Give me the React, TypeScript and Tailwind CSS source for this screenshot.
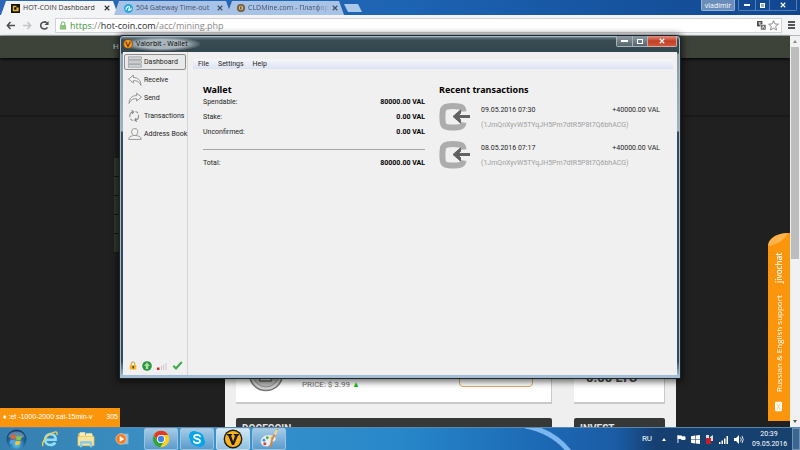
import React from "react";

const CHROME_FONT = "font-['Open_Sans','Noto_Sans',sans-serif]";
const WALLET_FONT = "font-['Roboto','Noto_Sans',sans-serif]";

type Glyph = { className?: string };

function CoinV({ className }: Glyph) {
  return (
    <svg viewBox="0 0 20 20" className={className} aria-hidden="true">
      <circle cx="10" cy="10" r="9.4" fill="#1d1a12" />
      <circle cx="10" cy="10" r="8" fill="#fbb21c" />
      <path d="M4 5h5v1.200l-1 .2 2.200 6.200 1.900-6-1.400-.4V5H16v1.200l-1 .3L11 16H9L5.200 6.500l-1.200-.3z" fill="#1d1a12" />
    </svg>
  );
}

function TitleCoin({ className }: Glyph) {
  return (
    <svg viewBox="0 0 20 20" className={className} aria-hidden="true">
      <circle cx="10" cy="10" r="9.5" fill="#8a4a08" />
      <circle cx="10" cy="10" r="8" fill="#f29a1c" />
      <path d="M5.500 5.500 10 15l4.500-9.500" fill="none" stroke="#6b3a08" strokeWidth="2.400" />
    </svg>
  );
}

function ChromeIcon({ className }: Glyph) {
  return (
    <svg viewBox="0 0 24 24" className={className} aria-hidden="true">
      <circle cx="12" cy="12" r="11" fill="#fbcf1c" />
      <path d="M2.500 6.500A11 11 0 0 1 21.600 6.700H12a5.300 5.300 0 0 0-5 7.200z" fill="#e0392b" />
      <path d="M2.500 6.500A11 11 0 0 0 11 23l4.700-7.300A5.300 5.300 0 0 1 7 14.200z" fill="#2fa34c" />
      <circle cx="12" cy="12" r="5.300" fill="#fff" />
      <circle cx="12" cy="12" r="4.200" fill="#3f82ea" />
    </svg>
  );
}

function SkypeIcon({ className }: Glyph) {
  return (
    <svg viewBox="0 0 24 24" className={className} aria-hidden="true">
      <circle cx="8" cy="8" r="6.800" fill="#0aa5e6" />
      <circle cx="16" cy="16" r="6.800" fill="#0aa5e6" />
      <circle cx="12" cy="12" r="9.500" fill="#0aa5e6" />
      <path d="M16 8.600c-.8-1.600-2.200-2.200-4-2.200-2.200 0-3.800 1-3.800 2.700 0 3.800 7.800 1.900 7.800 5.600 0 1.900-1.700 2.900-4 2.900-2 0-3.600-.8-4.300-2.500" fill="none" stroke="#fff" strokeWidth="2.300" strokeLinecap="round" />
    </svg>
  );
}

function PaintIcon({ className }: Glyph) {
  return (
    <svg viewBox="0 0 24 24" className={className} aria-hidden="true">
      <path d="M2 15c0-5 5-8.500 11-8 5 .4 8 3 7 6s-4 1.500-5.500 3.500S13 21 8.500 21C4.500 21 2 18.500 2 15z" fill="#e8eef2" stroke="#9fb4c2" strokeWidth=".7" />
      <circle cx="6" cy="13.500" r="1.700" fill="#3b91d8" />
      <circle cx="10" cy="10.500" r="1.700" fill="#4fb04a" />
      <circle cx="15" cy="10.500" r="1.500" fill="#f0c32b" />
      <circle cx="7" cy="17.700" r="1.800" fill="#d84634" />
      <path d="m21.500 1-6 12-1.500 8" fill="none" stroke="#c98a42" strokeWidth="2.200" strokeLinecap="round" />
      <path d="m19 7 2.500-6" stroke="#ecd3a4" strokeWidth="3" />
    </svg>
  );
}

function StartOrb({ className }: Glyph) {
  return (
    <svg viewBox="0 0 24 24" className={className} aria-hidden="true">
      <defs>
        <radialGradient id="orb" cx=".5" cy=".75" r=".7">
          <stop offset="0" stopColor="#5ec8ef" />
          <stop offset=".6" stopColor="#20639b" />
          <stop offset="1" stopColor="#164068" />
        </radialGradient>
      </defs>
      <circle cx="12" cy="12" r="11.500" fill="url(#orb)" />
      <path d="M2.500 9a10 9 0 0 1 19 0c-6 2-13 2-19 0z" fill="#fff" opacity=".3" />
      <path d="M6 7.500c2-1.200 4-1 5.500 0l-1 4.200c-1.800-.9-3.500-.9-5.500.2z" fill="#e8602c" />
      <path d="M12.500 8c1.800.9 3.700.8 5.700-.2l-1.100 4.300c-1.900 1-3.700 1-5.600 0z" fill="#8cc63e" />
      <path d="M4.800 13c2-1 3.700-1 5.400 0l-1 4.200c-1.700-1-3.500-1-5.400 0z" fill="#4aa6e6" />
      <path d="M11.200 13.300c1.900 1 3.700 1 5.600 0l-1 4.200c-2 1-3.800 1-5.600 0z" fill="#fbc62d" />
    </svg>
  );
}

function ExplorerE({ className }: Glyph) {
  return (
    <svg viewBox="0 0 24 24" className={className} aria-hidden="true">
      <path d="M6 13h13.500C20 8.500 17 5.500 12.800 5.500S5.500 8.800 5.500 13s3 7 7.200 7c3 0 5-1.200 6.200-3.300" fill="none" stroke="#8fdcfb" strokeWidth="3.600" />
      <path d="M3 21.500C-.5 18 8 5 18 2.800c3.500-.8 4.200 1.200 3 4" fill="none" stroke="#f7cf4c" strokeWidth="1.700" />
    </svg>
  );
}

function FolderIcon({ className }: Glyph) {
  return (
    <svg viewBox="0 0 24 22" className={className} aria-hidden="true">
      <path d="M2 3h7l2 2h10v14H2z" fill="#e9c964" />
      <path d="M4 1.500h7v6H4zM12 3h8v5h-8z" fill="#f7eeb4" />
      <path d="M1.500 7h21v12h-21z" fill="#f8e59b" stroke="#d8b655" strokeWidth=".7" />
      <path d="M4 21v-5.500c0-1.500 1-2.500 2.500-2.500h11c1.500 0 2.500 1 2.500 2.500V21h-3v-4.500H7V21z" fill="#8dcbe9" />
    </svg>
  );
}

function MediaIcon({ className }: Glyph) {
  return (
    <svg viewBox="0 0 24 24" className={className} aria-hidden="true">
      <path d="M9 3h14v18H9z" fill="#9fc9e6" opacity=".8" />
      <circle cx="10.500" cy="12" r="9" fill="#f37b22" stroke="#fbd0a5" strokeWidth="1.200" />
      <path d="m8 7 8 5-8 5z" fill="#fff" />
    </svg>
  );
}

function IncomingIcon({ className }: Glyph) {
  return (
    <svg viewBox="0 0 31 28" className={className} aria-hidden="true">
      <path d="M24.500 8.500C24.300 4.800 23 3.800 20 3.500c-4-.5-8.500-.5-11.500 0-3 .4-4.300 1.700-4.700 4.300-.5 4-.5 8.300 0 12 .4 2.600 1.800 3.900 4.500 4.300 3.700.6 8 .6 11.700 0 2.800-.4 4-1.300 4.500-4.600" fill="none" stroke="#adadad" strokeWidth="6" />
      <path d="M31 13.500H17" fill="none" stroke="#616161" strokeWidth="3" />
      <path d="M21.500 7v3.500l-3.500 3 3.500 3V20L14 13.500z" fill="#616161" stroke="#616161" />
    </svg>
  );
}

const navItems = [
  {
    label: "Dashboard",
    art: (
      <g fill="#d2d4d8" stroke="#84878c" strokeWidth="1">
        <rect x="1" y="1.500" width="24" height="4" />
        <rect x="1" y="8" width="24" height="4" />
        <rect x="1" y="14.500" width="24" height="4" />
      </g>
    ),
  },
  {
    label: "Receive",
    art: <path d="M10 2 1 8.500 10 15v-4c7 0 11 2 14 8 0-8-5-13-14-13z" fill="#f4f4f4" stroke="#7d8084" strokeWidth="1.400" />,
  },
  {
    label: "Send",
    art: <path d="m16 2 9 6.500-9 6.500v-4C9 11 5 13 2 19 2 11 7 6 16 6z" fill="#f4f4f4" stroke="#7d8084" strokeWidth="1.400" />,
  },
  {
    label: "Transactions",
    art: (
      <g fill="none" stroke="#85888c" strokeWidth="1.800">
        <path d="M3.500 12C2.500 7 5 4 10 3M6.500.5 10.500 3 8 6.500" />
        <path d="M19.500 8c1 5-1.500 8-6.500 9m3.500 2.500L12.500 17l2.500-3.500" />
        <path d="M14 2.500q3 .5 4.500 3M9 17.500q-3-.5-4.500-3" />
      </g>
    ),
  },
  {
    label: "Address Book",
    art: (
      <g fill="#f4f4f4" stroke="#7d8084" strokeWidth="1.400">
        <path d="M1.500 19c0-4 3-5.500 7-6l1.500-1h5l1.500 1c4.500.5 8 2 8 6z" />
        <path d="M12.500 1c4.500 0 6 2.500 5.500 6-.4 3-2.500 5.500-5.500 5.500S7.400 10 7 7c-.5-3.500 1-6 5.500-6z" />
      </g>
    ),
  },
];

const balances = [
  { label: "Spendable:", value: "80000.00 VAL" },
  { label: "Stake:", value: "0.00 VAL" },
  { label: "Unconfirmed:", value: "0.00 VAL" },
];

const transactions = [
  { date: "09.05.2016 07:30", amount: "+40000.00 VAL" },
  { date: "08.05.2016 07:17", amount: "+40000.00 VAL" },
];

function TabShape({ active, children }: { active?: boolean; children: React.ReactNode }) {
  return (
    <button
      type="button"
      className={
        "-mr-1 flex h-[14px] w-[117px] items-center gap-[3px] pr-2 pl-[10px] text-left text-[7px] [clip-path:polygon(5px_0,112px_0,117px_100%,0_100%)] " +
        (active ? "bg-[#f3f4f6] text-[#333]" : "bg-[#a9c3e6] text-[#3d4f6b]")
      }
    >
      {children}
    </button>
  );
}

function Cross({ className }: Glyph) {
  return (
    <svg viewBox="0 0 8 8" className={className} aria-hidden="true">
      <path d="m1 1 6 6m0-6-6 6" stroke="currentColor" strokeWidth="1.500" />
    </svg>
  );
}

function BrowserTop() {
  return (
    <header className={"shrink-0 " + CHROME_FONT}>
      <div className="flex h-[15px] items-start justify-between bg-gradient-to-r from-[#2c68b5] via-[#1d64b3] to-[#11468f]">
        <div className="flex items-end pt-px pl-px">
          <TabShape active>
            <svg viewBox="0 0 10 10" className="size-[9px] shrink-0" aria-hidden="true">
              <path d="M0 0h10v10H0z" fill="#151515" />
              <path d="M2 2h4v1.500H3.500v3H6V8H2zM6 4h2.500v4H6z" fill="#e5b52d" />
            </svg>
            <span className="flex-1 whitespace-nowrap">HOT-COIN Dashboard</span>
            <Cross className="size-[6px] shrink-0" />
          </TabShape>
          <TabShape>
            <svg viewBox="0 0 10 10" className="size-[9px] shrink-0" aria-hidden="true">
              <circle cx="5" cy="5" r="5" fill="#26a9df" />
              <path d="M2 6.500C3 3 5 2 6 3.500S4 7 5.500 7 7.500 5.500 8.500 5" fill="none" stroke="#fff" strokeWidth="1.200" />
            </svg>
            <span className="flex-1 whitespace-nowrap">504 Gateway Time-out</span>
            <Cross className="size-[6px] shrink-0" />
          </TabShape>
          <TabShape>
            <svg viewBox="0 0 10 10" className="size-[8px] shrink-0" aria-hidden="true">
              <circle cx="5" cy="5" r="5" fill="#6b5a3a" />
              <circle cx="5" cy="5" r="3" fill="#cdb684" />
              <path d="M4 3h1.500v4H4z" fill="#5a4a2c" />
            </svg>
            <span className="flex-1 whitespace-nowrap [mask-image:linear-gradient(90deg,#000_85%,transparent)]">CLDMine.com - Платфор</span>
            <Cross className="size-[6px] shrink-0" />
          </TabShape>
          <button type="button" aria-label="New tab" className="mb-[3px] ml-1 h-[8px] w-[18px] bg-[#a9c8ea] [clip-path:polygon(0_0,14px_0,18px_100%,4px_100%)]" />
        </div>
        <div className="flex text-white">
          <button type="button" className="mr-[3px] h-[11px] w-[34px] rounded-b-xs border border-t-0 border-[#93b4d8] bg-[#6b8db9] text-center text-[7px] leading-[9px]">
            vladimir
          </button>
          <button type="button" aria-label="Minimize" className="flex h-[11px] w-[17px] items-center justify-center rounded-bl-xs border-b border-l border-[#4f80b8]">
            <span className="h-[2px] w-[6px] bg-white" />
          </button>
          <button type="button" aria-label="Restore" className="flex h-[11px] w-[14px] items-center justify-center border-b border-l border-[#4f80b8]">
            <span className="size-[5px] border border-white bg-[#8fb1dc]" />
          </button>
          <button type="button" aria-label="Close" className="mr-[3px] flex h-[11px] w-[28px] items-center justify-center rounded-br-xs border-x border-b border-[#4f80b8]">
            <Cross className="size-[6px]" />
          </button>
        </div>
      </div>
      <div className="flex h-[21px] items-center border-b border-[#b5b7ba] bg-[#f3f4f6] pr-[5px] pl-[6px]">
        <button type="button" aria-label="Back">
          <svg viewBox="0 0 10 10" className="size-[9px]"><path d="M10 5H1.500M5 1 1.500 5 5 9" fill="none" stroke="#4e4e4e" strokeWidth="1.700" /></svg>
        </button>
        <button type="button" aria-label="Forward" className="ml-[8px]">
          <svg viewBox="0 0 10 10" className="size-[9px]"><path d="M0 5h8.500M5 1l3.500 4L5 9" fill="none" stroke="#c4c4c4" strokeWidth="1.700" /></svg>
        </button>
        <button type="button" aria-label="Reload" className="ml-[8px]">
          <svg viewBox="0 0 10 10" className="size-[9px]"><path d="M8.300 7A4 4 0 1 1 7.500 2" fill="none" stroke="#4e4e4e" strokeWidth="1.700" /><path d="M9.500 0v4.500H5z" fill="#4e4e4e" /></svg>
        </button>
        <div className="ml-[6px] flex h-[15px] flex-1 items-center border border-[#d2d3d6] bg-white pr-[2px] pl-[3px]">
          <svg viewBox="0 0 8 10" className="h-[9px] w-[8px]" aria-hidden="true">
            <path d="M2 5V3.200C2 .3 6 .3 6 3.200V5" fill="none" stroke="#8ac17c" strokeWidth="1.300" />
            <path d="M.5 4.500h7v5h-7z" fill="#8ac17c" />
          </svg>
          <div role="textbox" aria-label="Address" tabIndex={0} className="ml-[3px] flex-1 text-[9px] leading-[13px] text-[#8a8a8a]">
            <span className="text-[#3c9440]">https</span>://<span className="text-[#2b2b2b]">hot-coin.com</span>/acc/mining.php
          </div>
          <button type="button" aria-label="Translate" className="mr-[2px]">
            <svg viewBox="0 0 10 10" className="size-[9px]"><path d="M0 0h6v6H0z" fill="#4e4e4e" /><path d="M4 4h6v6H4z" fill="#666" stroke="#fff" strokeWidth=".6" /><path d="M1.500 2h3M3 2v2.500M5.700 8.500 7 5.500l1.300 3" fill="none" stroke="#fff" strokeWidth=".8" /></svg>
          </button>
          <button type="button" aria-label="Bookmark">
            <svg viewBox="0 0 12 12" className="size-[11px]"><path d="m6 .8 1.500 3.500 3.800.3-2.900 2.500.9 3.800L6 8.900l-3.300 2 .9-3.800L.7 4.600l3.800-.3z" fill="#fff" stroke="#666" strokeWidth=".8" /></svg>
          </button>
        </div>
        <button type="button" aria-label="Menu" className="ml-[6px] flex w-[7px] flex-col gap-px">
          <span className="h-[2px] bg-[#555]" />
          <span className="h-[2px] bg-[#555]" />
          <span className="h-[2px] bg-[#555]" />
        </button>
      </div>
    </header>
  );
}

function SiteContent() {
  return (
    <div className="flex min-h-0 flex-1">
      <div className="flex min-w-0 flex-1 flex-col bg-[#202020]">
        <div className="h-[22px] shrink-0 bg-[#3d4338] pl-[113px] font-['Roboto',sans-serif] text-[8px] leading-[22px] text-[#c9ccc4] shadow-[0_1px_3px_#000]">H</div>
        <div className="h-[59px] shrink-0 border-b-2 border-[#191919]" />
        <div className="flex min-h-0 flex-1">
          <div className="w-[225px] pt-[41px] pl-[114px]">
            {[0, 1, 2, 3, 4].map((i) => (
              <div key={i} className="h-[19px] border-b border-[#161a14] bg-[#303b2a]" />
            ))}
          </div>
          <div className="flex w-[451px] flex-col overflow-hidden bg-[#efefef] px-[11px] font-['Roboto',sans-serif]">
            <div className="grid shrink-0 grid-cols-[316px_91px] gap-[22px]">
              <div className="flex h-[287px] items-end border-r border-b-2 border-[#c9c9c9] bg-white pb-[10px] pl-[12px]">
                <svg viewBox="0 0 36 36" className="size-[36px]" aria-hidden="true">
                  <circle cx="18" cy="18" r="16.500" fill="#cfcfcf" stroke="#777" strokeWidth="1.500" />
                  <circle cx="18" cy="18" r="13" fill="#b9b9b9" stroke="#8c8c8c" />
                  <path d="M10 15h16l-3 10H12zM12 20h12" fill="#dedede" stroke="#666" strokeWidth="1.500" />
                </svg>
                <p className="mb-px ml-[18px] text-[8px] leading-[12px] whitespace-nowrap text-[#6f6f6f]">
                  PRICE: $ 3.99 <span className="text-[#19c423]">▲</span>
                </p>
                <button type="button" className="mb-[5px] ml-auto h-[20px] w-[74px] rounded-sm border border-[#e2ab62] text-[7px] text-[#777]">SELECT</button>
                <div className="w-[18px]" />
              </div>
              <div className="flex h-[287px] items-end border-r border-b-2 border-[#c9c9c9] bg-white pb-[17px] pl-[12px] text-[13px] leading-[14px] font-bold whitespace-nowrap text-[#4a4a4a]">0.00 LTC</div>
            </div>
            <div className="mt-[14px] grid shrink-0 grid-cols-[316px_91px] gap-[22px] text-[10px] leading-[12px] font-bold text-[#e2e2e2]">
              <h2 className="h-[24px] rounded-t-xs bg-[#363837] pt-[5px] pl-[6px]">DOGECOIN</h2>
              <h2 className="h-[24px] rounded-t-xs bg-[#363837] pt-[5px] pl-[6px]">INVEST</h2>
            </div>
          </div>
        </div>
      </div>
      <div className="flex w-[10px] flex-col items-center bg-[#f1f1f1]">
        <span className="mt-[4px] size-0 border-x-2 border-b-3 border-x-transparent border-b-[#8b8b8b]" />
        <span className="mt-[4px] h-[212px] w-[8px] bg-[#bdbdbd]" />
        <span className="mt-auto mb-[4px] size-0 border-x-2 border-t-3 border-x-transparent border-t-[#555]" />
      </div>
    </div>
  );
}

function WalletWindow() {
  return (
    <section
      aria-label="Valorbit - Wallet"
      className={"absolute top-[35px] left-[119px] flex h-[344px] w-[562px] flex-col rounded-t-sm border border-[#1c252b] bg-[#33454e] px-[3px] pb-[3px] text-[7px] text-[#1e1e1e] shadow-[0_1px_6px_2px_rgba(0,0,0,0.55),inset_0_0_0_1px_#a6bccb] bg-[linear-gradient(180deg,#8698a0_0,#3a4c54_4px,#33454d_17px,#8b9aa2_18px,#a2b1ba_95px,#36495a_96px,#33485a_325px,#a2bfdb_340px)] " + WALLET_FONT}
    >
      <div className="flex h-[16px] shrink-0 items-center justify-between">
        <div className="flex items-center gap-[3px] rounded-full bg-[radial-gradient(ellipse,#a9b5bb_45%,transparent_75%)] pr-[12px]">
          <TitleCoin className="size-[10px]" />
          <h1 className="font-['Open_Sans',sans-serif] text-[7px] leading-[14px] whitespace-nowrap text-black">Valorbit - Wallet</h1>
        </div>
        <div className="flex self-start">
          <button type="button" aria-label="Minimize" className="flex h-[11px] w-[17px] items-center justify-center rounded-bl-xs border border-t-0 border-[#a8b2b8] bg-gradient-to-b from-[#8f9ba2] to-[#56656e]">
            <span className="h-[2px] w-[7px] bg-white" />
          </button>
          <button type="button" aria-label="Maximize" className="flex h-[11px] w-[15px] items-center justify-center border-r border-b border-[#a8b2b8] bg-gradient-to-b from-[#8f9ba2] to-[#56656e]">
            <span className="h-[5px] w-[6px] border border-white" />
          </button>
          <button type="button" aria-label="Close" className="flex h-[11px] w-[29px] items-center justify-center rounded-br-xs border-r border-b border-[#d8aaa0] bg-gradient-to-b from-[#dc9080] via-[#c53e25] to-[#d0563c] text-white">
            <Cross className="size-[6px]" />
          </button>
        </div>
      </div>
      <div className="flex min-h-0 flex-1 bg-[#f0f0f0]">
        <nav className="flex w-[65px] shrink-0 flex-col justify-between border-r border-[#d6d6d6] px-px pt-[2px] pb-[2px]">
          <div className="flex h-[88px] flex-col justify-between">
            {navItems.map((item, i) => (
              <button
                type="button"
                key={item.label}
                className={
                  "flex h-[16px] items-center gap-[2px] border pl-[3px] text-[7px] whitespace-nowrap " +
                  (i === 0 ? "rounded-xs border-[#8d8d8d] bg-[#e9e9e9]" : "border-transparent")
                }
              >
                <svg viewBox="0 0 26 20" className="h-[12px] w-[14px] shrink-0" preserveAspectRatio="none" aria-hidden="true">
                  {item.art}
                </svg>
                {item.label}
              </button>
            ))}
          </div>
          <div className="flex h-[15px] items-center gap-[5px] pl-[5px]">
            <svg viewBox="0 0 9 10" className="h-[9px] w-[8px]" aria-label="Locked">
              <path d="M2.500 5V3c0-2.500 4-2.500 4 0v2" fill="none" stroke="#c6a154" strokeWidth="1.200" />
              <path d="M.8 4.500h7.400v5H.8z" fill="#f9b71d" />
              <path d="M4 5.500h1.500v3H4z" fill="#333" />
            </svg>
            <svg viewBox="0 0 10 10" className="size-[10px]" aria-label="Staking">
              <circle cx="5" cy="5" r="4.800" fill="#2d9541" />
              <path d="M5 1.500 8 5H6.200v3H3.800V5H2z" fill="#a6e5a3" />
            </svg>
            <svg viewBox="0 0 10 9" className="h-[9px] w-[10px]" aria-label="Signal">
              <path d="M0 6.500h2.500V9H0z" fill="#d22" />
              <path d="M4 5h1v4H4zM6 3.500h1V9H6zM8.500 2h1v7h-1z" fill="#c9c9c9" />
            </svg>
            <svg viewBox="0 0 10 9" className="h-[9px] w-[11px]" aria-label="Synchronized">
              <path d="M.8 4.800 3.500 7.500 9.300 1" fill="none" stroke="#43a84a" strokeWidth="2" />
            </svg>
          </div>
        </nav>
        <div className="flex min-w-0 flex-1 flex-col pr-[4px] pl-[5px]">
          <div role="menubar" className="mt-[7px] flex h-[10px] items-center gap-[9px] bg-gradient-to-b from-[#f6f7fb] to-[#dde2f2] pl-[5px]">
            {["File", "Settings", "Help"].map((m) => (
              <button type="button" role="menuitem" key={m} className="leading-[10px]">
                {m}
              </button>
            ))}
          </div>
          <div className="flex justify-between pt-[15px] pr-[13px] pl-[10px]">
            <section className="w-[222px]">
              <h2 className="font-['Noto_Sans',sans-serif] text-[9px] leading-[12px] font-bold text-black">Wallet</h2>
              <dl className="flex flex-col gap-[5px] pt-px">
                {balances.map((b) => (
                  <div key={b.label} className="flex justify-between leading-[10px]">
                    <dt>{b.label}</dt>
                    <dd className="font-bold text-black">{b.value}</dd>
                  </div>
                ))}
                <div className="mt-[7px] flex justify-between border-t border-[#a5a5a5] pt-[8px] leading-[10px]">
                  <dt>Total:</dt>
                  <dd className="font-bold text-black">80000.00 VAL</dd>
                </div>
              </dl>
            </section>
            <section className="w-[221px]">
              <h2 className="font-['Noto_Sans',sans-serif] text-[9px] leading-[12px] font-bold text-black">Recent transactions</h2>
              <ul className="flex flex-col gap-[10px] pt-[7px]">
                {transactions.map((t) => (
                  <li key={t.date} className="flex h-[28px] gap-[11px]">
                    <IncomingIcon className="h-[28px] w-[31px] shrink-0" />
                    <div className="flex-1 leading-[10px]">
                      <div className="flex justify-between pt-[2px]">
                        <span>{t.date}</span>
                        <span>{t.amount}</span>
                      </div>
                      <p className="pt-[5px] text-[#a0a0a0]">(1JmQnXyvW5TYqJH5Pm7dtR5P8t7Q6bhACG)</p>
                    </div>
                  </li>
                ))}
              </ul>
            </section>
          </div>
        </div>
      </div>
    </section>
  );
}

function Taskbar() {
  const pinned = "flex h-full w-[36px] items-center justify-center";
  const running = "flex h-full w-[34px] items-center justify-center rounded-xs border border-[#9cc4df] bg-gradient-to-b from-[#a4cbe6] to-[#5a9bcd]";
  const focused = "flex h-full w-[34px] items-center justify-center rounded-xs border border-[#c3dcec] bg-gradient-to-b from-[#d3e7f3] to-[#8fc0e2]";
  return (
    <footer className="relative flex h-[23px] shrink-0 items-center overflow-hidden border-t border-[#5a87ae] bg-[linear-gradient(90deg,#357fae_0,#3c94cb_25%,#2787c9_50%,#1c68b4_68%,#1b5ca5_77%,#153f70_82%,#17426f_100%)] font-['Open_Sans',sans-serif]">
      <svg viewBox="0 0 60 23" className="absolute top-0 left-[525px] h-[23px] w-[60px]" aria-hidden="true">
        <path d="M0-2C22 2 36 12 46 26" fill="none" stroke="#8cc4fa" strokeWidth="5" opacity=".85" />
      </svg>
      <button type="button" aria-label="Start" className="flex w-[32px] justify-center"><StartOrb className="size-[21px]" /></button>
      <button type="button" aria-label="Internet Explorer" className={pinned}><ExplorerE className="size-[18px]" /></button>
      <button type="button" aria-label="Explorer" className={pinned}><FolderIcon className="h-[17px] w-[20px]" /></button>
      <button type="button" aria-label="Media Player" className={pinned}><MediaIcon className="size-[14px]" /></button>
      <div className="ml-[4px] flex h-full gap-[2px]">
        <button type="button" aria-label="Chrome" className={running}><ChromeIcon className="size-[18px]" /></button>
        <button type="button" aria-label="Skype" className={running}><SkypeIcon className="size-[18px]" /></button>
        <button type="button" aria-label="Valorbit" className={focused}><CoinV className="size-[20px]" /></button>
        <button type="button" aria-label="Paint" className={running}><PaintIcon className="size-[20px]" /></button>
      </div>
      <div className="ml-auto flex h-full items-center text-[7px] text-white">
        <span className="mr-[10px] font-['Roboto',sans-serif] text-[8px]">RU</span>
        <span className="mr-[11px] size-0 border-x-2 border-b-3 border-x-transparent border-b-white" />
        <div className="flex items-center gap-[5px]">
          <svg viewBox="0 0 10 9" className="h-[8px] w-[9px]" aria-hidden="true"><path d="M1 0v9M1 1h4v1h4v3H5V4H1z" fill="#fff" stroke="#fff" /></svg>
          <svg viewBox="0 0 9 9" className="size-[9px]" aria-hidden="true"><path d="m0 1.200 4-.6v3.600H0zM4.600.5 9 0v4.200H4.600zM0 4.800h4v3.600l-4-.6zM4.600 4.800H9V9l-4.400-.5z" fill="#fff" /></svg>
          <svg viewBox="0 0 9 9" className="size-[9px]" aria-hidden="true"><path d="M1 0h3v3H1zM5 2l3-2v6H5z" fill="#ddd" /><path d="M1 3h5v6H1z" fill="#c4202c" /></svg>
          <svg viewBox="0 0 10 9" className="h-[9px] w-[10px]" aria-hidden="true"><path d="M0 7h1.500v2H0zM2.500 5.500H4V9H2.500zM5 3.500h1.500V9H5zM7.500 1H9v8H7.500z" fill="#fff" /></svg>
          <svg viewBox="0 0 10 9" className="h-[9px] w-[10px]" aria-hidden="true"><path d="M0 3h2l3-3v9L2 6H0z" fill="#fff" /><path d="M6.500 2.500q1.500 2 0 4M8 1q2.500 3.500 0 7" fill="none" stroke="#fff" strokeWidth=".9" /></svg>
        </div>
        <div className="mr-[6px] ml-[8px] w-[34px] text-center font-['Roboto',sans-serif] leading-[10px] whitespace-nowrap">
          <p>20:39</p>
          <p>09.05.2016</p>
        </div>
        <button type="button" aria-label="Show desktop" className="h-full w-[8px] border border-[#6f93b5] bg-[#3d6590]" />
      </div>
    </footer>
  );
}

export default function App() {
  return (
    <div className="relative flex h-screen flex-col overflow-hidden bg-[#202020]">
      <BrowserTop />
      <SiteContent />
      <Taskbar />
      <aside className="absolute bottom-[23px] left-0 flex h-[19px] w-[120px] items-center justify-between bg-[#fb960c] pr-[2px] pl-[3px] font-['Liberation_Sans',sans-serif] text-[7px] whitespace-nowrap text-white">
        <span>♦ :et -1000-2000 sat-15min-v</span>
        <span>305</span>
      </aside>
      <button
        type="button"
        className="absolute right-[10px] bottom-[29px] flex h-[188px] w-[22px] rotate-180 flex-row items-center gap-[9px] overflow-hidden bg-[#fb960c] pt-[9px] pb-[20px] font-['Open_Sans',sans-serif] text-[8px] whitespace-nowrap text-white [border-bottom-right-radius:20px_13px] [writing-mode:vertical-rl]"
      >
        <svg viewBox="0 0 8 11" className="h-[11px] w-[7px]" aria-hidden="true">
          <rect width="8" height="11" rx="1.500" fill="#fff" />
          <path d="m2 2 2 3.500L2 9m4-7L4 5.500 6 9" fill="none" stroke="#fbb04a" strokeWidth=".8" />
        </svg>
        <span>Russian &amp; English support</span>
        <span className="mt-auto font-semibold">jivochat</span>
        <svg viewBox="0 0 22 13" className="absolute right-0 bottom-0 h-[13px] w-[22px]" aria-hidden="true">
          <path d="M22 0C14 1 5 6 2 13h20z" fill="#ffc069" opacity=".7" />
        </svg>
      </button>
      <WalletWindow />
    </div>
  );
}
